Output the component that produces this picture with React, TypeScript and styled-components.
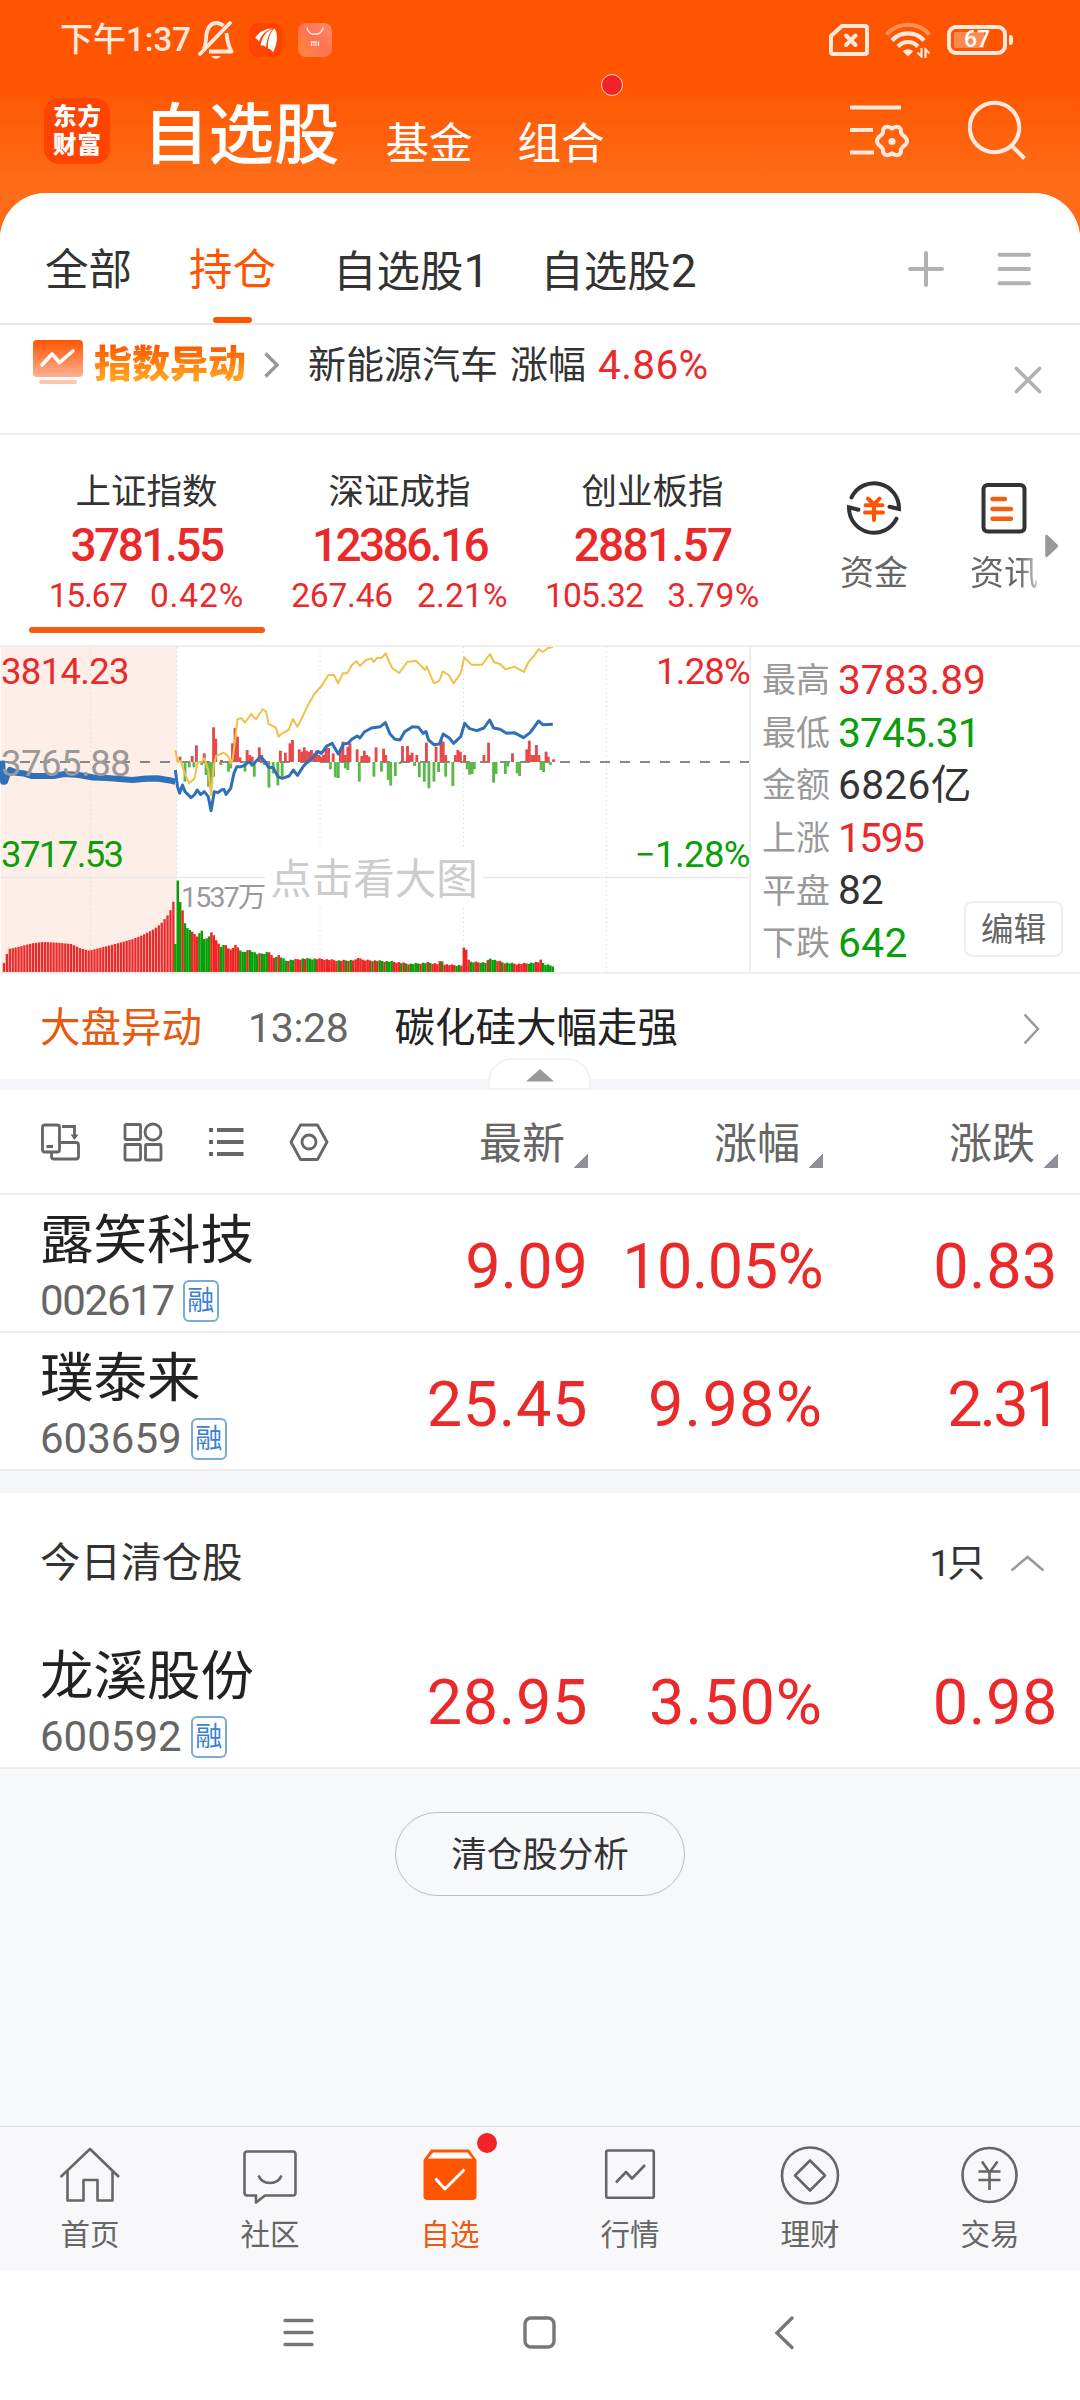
import React from "react";
import styled, { createGlobalStyle, css } from "styled-components";

const RED = "#ea2a2a";
const GREEN = "#0a9e0a";
const ORANGE = "#ff5500";
const SANS = `Roboto, "Noto Sans CJK SC", sans-serif`;

const GlobalStyle = createGlobalStyle`
  *, *::before, *::after { box-sizing: border-box; }
  body { margin: 0; background: #fff; font-family: ${SANS}; -webkit-font-smoothing: antialiased; }
`;

const Screen = styled.div`
  width: 1080px;
  height: 2400px;
  display: flex;
  flex-direction: column;
  overflow: hidden;
  background: linear-gradient(#ff5500 0, #ff5500 84px, #ff6c17 180px, #ff6c17 300px);
`;

const Txt = styled.span<{ $s: number; $c?: string; $w?: number; $ls?: number }>`
  font-size: ${(p) => p.$s}px;
  line-height: 1;
  white-space: pre;
  color: ${(p) => p.$c || "#333"};
  font-weight: ${(p) => p.$w || 400};
  letter-spacing: ${(p) => p.$ls || 0}px;
`;

/* ---------- status bar ---------- */
const StatusBar = styled.div`
  height: 80px;
  padding: 0 73px 1px 60px;
  display: flex;
  align-items: center;
  color: #ffe9dd;
`;
const StatusIcons = styled.div`
  display: flex;
  align-items: center;
  gap: 15px;
  margin-left: 7px;
`;
const StatusRight = styled.div`
  margin-left: auto;
  display: flex;
  align-items: center;
  gap: 16px;
`;
const Battery = styled.div`
  position: relative;
  width: 60px;
  height: 30px;
  border: 4px solid #ffe9dd;
  border-radius: 9px;
  display: flex;
  align-items: center;
  justify-content: center;
  background: linear-gradient(90deg, #ff8a50 66%, transparent 66%) content-box;
  padding: 3px;
  &::after {
    content: "";
    position: absolute;
    right: -10px;
    top: 6px;
    width: 4px;
    height: 10px;
    border-radius: 0 3px 3px 0;
    background: #ffe9dd;
  }
`;

/* ---------- app header ---------- */
const Header = styled.header`
  height: 113px;
  padding: 0 52px 0 44px;
  display: flex;
  align-items: flex-start;
`;
const Logo = styled.div`
  width: 66px;
  height: 66px;
  margin-top: 18px;
  border-radius: 15px;
  background: #ff4400;
  display: grid;
  grid-template-columns: 24.5px 24.5px;
  grid-auto-rows: 28px;
  place-content: center;
  place-items: center;
  color: #fff;
  font: 900 23.5px/28px ${SANS};
`;
const Title = styled.h1`
  margin: 23px 0 0 33px;
  font-size: 65.5px;
  line-height: 66px;
  font-weight: 500;
  color: #fff;
`;
const HeaderTab = styled.div<{ $ml: number }>`
  position: relative;
  margin: 42px 0 0 ${(p) => p.$ml}px;
  font-size: 43.5px;
  line-height: 46px;
  color: #fff;
`;
const Dot = styled.i<{ $right: number; $top: number; $ring?: boolean }>`
  position: absolute;
  right: ${(p) => p.$right}px;
  top: ${(p) => p.$top}px;
  width: ${(p) => (p.$ring ? 22 : 20)}px;
  height: ${(p) => (p.$ring ? 22 : 20)}px;
  border-radius: 50%;
  background: #f02328;
  ${(p) => p.$ring && css`border: 1.5px solid #ffd9c8;`}
`;
const HeaderActions = styled.div`
  margin: 20px 0 0 auto;
  display: flex;
  gap: 58px;
`;

/* ---------- sheet ---------- */
const Sheet = styled.main`
  flex: 1;
  display: flex;
  flex-direction: column;
  background: #f7f8fa;
  border-radius: 46px 46px 0 0;
  overflow: hidden;
`;
const Tabs = styled.nav`
  height: 132px;
  padding: 0 47px 0 45px;
  display: flex;
  gap: 57px;
  background: #fff;
  border-bottom: 2px solid #e8e8e8;
`;
const Tab = styled.div<{ $on?: boolean; $ml?: number }>`
  display: flex;
  flex-direction: column;
  align-items: center;
  justify-content: space-between;
  margin-left: ${(p) => p.$ml || 0}px;
  padding-top: 55px;
  font-size: 43.5px;
  line-height: 46px;
  color: ${(p) => (p.$on ? ORANGE : "#333")};
  &::after {
    content: "";
    width: 39px;
    height: 6px;
    border-radius: 3px;
    background: ${(p) => (p.$on ? ORANGE : "transparent")};
  }
`;
const TabDigit = styled.span`
  font-size: 46px;
`;
const TabTools = styled.div`
  margin-left: auto;
  padding-top: 57px;
  display: flex;
  gap: 50px;
`;

const Alert = styled.section`
  height: 110px;
  padding: 14px 38px 0 32px;
  display: flex;
  align-items: flex-start;
  background: #fff;
  border-bottom: 2px solid #ececec;
`;
const AlertTitle = styled.div`
  margin: 1px 0 0 10px;
  font: 900 38px/42px "Noto Sans CJK SC", sans-serif;
  background: linear-gradient(#ff5a00 15%, #ffa21f 90%);
  -webkit-background-clip: text;
  color: transparent;
`;
const AlertBody = styled.div<{ $ml: number }>`
  margin: 5px 0 0 ${(p) => p.$ml}px;
  display: flex;
  align-items: center;
  gap: 12px;
  height: 42px;
`;
const AlertClose = styled.div`
  margin: 27px 0 0 auto;
  height: 28px;
`;

/* ---------- indices ---------- */
const Indices = styled.section`
  height: 210px;
  padding-left: 20px;
  display: flex;
  background: #fff;
`;
const IndexCard = styled.div<{ $on?: boolean }>`
  width: 253px;
  display: flex;
  flex-direction: column;
  align-items: center;
  padding-top: 40px;
  &::after {
    content: "";
    margin-top: 14px;
    width: 236px;
    height: 6px;
    border-radius: 3px;
    background: ${(p) => (p.$on ? "#f75b0b" : "transparent")};
  }
`;
const IndexLine = styled.div<{ $h: number; $gap?: number }>`
  height: ${(p) => p.$h}px;
  display: flex;
  align-items: center;
  gap: ${(p) => p.$gap || 0}px;
`;
const Shortcut = styled.div<{ $ml: number; $fade?: boolean }>`
  width: 70px;
  margin-left: ${(p) => p.$ml}px;
  padding-top: 45px;
  display: flex;
  flex-direction: column;
  align-items: center;
  gap: 20px;
  ${(p) => p.$fade && css`
    ${Txt} {
      background: linear-gradient(90deg, #666 72%, #c4c4c4 100%);
      -webkit-background-clip: text;
      color: transparent;
    }
  `}
`;
const MoreArrow = styled.div`
  margin: 99px 0 0 6px;
`;

/* ---------- chart ---------- */
const ChartRow = styled.section`
  height: 329px;
  display: flex;
  background: #fff;
  border-top: 2px solid #eee;
  border-bottom: 2px solid #eee;
`;
const ChartBox = styled.div`
  position: relative;
  width: 751px;
  height: 325px;
  border-right: 2px solid #eee;
`;
const Label = styled.span<{ $x?: number; $r?: number; $y: number; $c: string; $s?: number; $ls?: number }>`
  position: absolute;
  ${(p) => (p.$r !== undefined ? `right: ${p.$r}px;` : `left: ${p.$x}px;`)}
  top: ${(p) => p.$y}px;
  font-size: ${(p) => p.$s || 36.5}px;
  line-height: 40px;
  white-space: pre;
  letter-spacing: ${(p) => p.$ls || 0}px;
  color: ${(p) => p.$c};
`;
const Hint = styled.span`
  position: absolute;
  left: 265px;
  top: 202px;
  width: 218px;
  height: 56px;
  background: #fff;
  text-align: center;
  font-size: 41.5px;
  line-height: 62px;
  color: #ccc;
`;
const Stats = styled.div`
  flex: 1;
  position: relative;
  padding: 7px 0 0 11px;
  display: flex;
  flex-direction: column;
`;
const Stat = styled.div`
  height: 52.6px;
  display: flex;
  align-items: center;
  gap: 8px;
`;
const EditButton = styled.button`
  position: absolute;
  right: 17px;
  bottom: 15px;
  width: 99px;
  height: 56px;
  padding: 3px 0 0;
  border: 2px solid #eee;
  border-radius: 8px;
  background: #fff;
  color: #666;
  font: 400 32.5px/1 ${SANS};
`;

/* ---------- news ---------- */
const News = styled.section`
  position: relative;
  height: 105px;
  padding: 4px 40px 0 40px;
  display: flex;
  align-items: center;
  background: #fff;
`;
const NewsTime = styled.div`
  margin: 0 46px 0 46px;
  display: flex;
`;
const PushRight = styled.div`
  margin-left: auto;
  display: flex;
`;
const CollapseHandle = styled.div`
  position: absolute;
  left: 488px;
  top: 84px;
  width: 103px;
  height: 32px;
  border: 2px solid #f1f2f4;
  border-radius: 24px 24px 3px 3px;
  background: #fff;
  display: flex;
  justify-content: center;
  padding-top: 9px;
`;
const Band = styled.div<{ $h: number }>`
  height: ${(p) => p.$h}px;
  background: #f5f6f9;
`;

/* ---------- table ---------- */
const TableHead = styled.div`
  height: 105px;
  padding: 2px 22px 0 40px;
  display: grid;
  grid-template-columns: 313px 235px 235px 235px;
  align-items: center;
  background: #fff;
  border-bottom: 2px solid #eee;
`;
const ViewTools = styled.div`
  display: flex;
  gap: 43px;
  padding-bottom: 2px;
`;
const ColHead = styled.div`
  display: flex;
  justify-content: flex-end;
  align-items: flex-end;
  gap: 9px;
  height: 50px;
  font-size: 43px;
  line-height: 48px;
  color: #666;
  &::after {
    content: "";
    width: 14px;
    height: 15px;
    background: linear-gradient(to bottom right, transparent 50%, #8f9096 50%);
  }
`;
const Row = styled.div`
  height: 138px;
  padding: 0 22px 0 40px;
  display: grid;
  grid-template-columns: 278px 270px 235px 235px;
  background: #fff;
  border-bottom: 2px solid #ececec;
`;
const NameCell = styled.div`
  display: flex;
  flex-direction: column;
  padding-top: 19px;
  gap: 12px;
`;
const CodeLine = styled.div`
  height: 42px;
  display: flex;
  align-items: center;
  gap: 9px;
`;
const Badge = styled.span`
  width: 36px;
  height: 42px;
  border: 2px solid #79abd9;
  border-radius: 6px;
  display: flex;
  align-items: center;
  justify-content: center;
  padding-top: 2px;
  font-size: 27px;
  line-height: 1;
  color: #3b82cc;
`;
const Value = styled.div<{ $ls?: number }>`
  padding-top: 40px;
  text-align: right;
  font-size: 63px;
  line-height: 64px;
  white-space: nowrap;
  letter-spacing: ${(p) => p.$ls || 0}px;
  color: ${RED};
`;
const ClearedHead = styled.div`
  height: 138px;
  padding: 3px 35px 0 40px;
  display: flex;
  align-items: center;
  background: #fff;
`;
const CountWrap = styled.div`
  margin-left: auto;
  display: flex;
  align-items: center;
  gap: 28px;
`;
const AnalysisButton = styled.button`
  align-self: center;
  margin-top: 43px;
  padding: 4px 0 0;
  width: 290px;
  height: 84px;
  border: 1.5px solid #bcbec2;
  border-radius: 42px;
  background: transparent;
  color: #333;
  font: 400 35.5px/1 ${SANS};
`;

/* ---------- bottom ---------- */
const BottomNav = styled.nav`
  margin-top: auto;
  height: 144px;
  flex: none;
  display: grid;
  grid-template-columns: repeat(6, 1fr);
  background: #f8f8fa;
  border-top: 1.5px solid #dfe0e3;
`;
const NavItem = styled.div<{ $on?: boolean }>`
  position: relative;
  display: flex;
  flex-direction: column;
  align-items: center;
  padding-top: 19px;
  gap: 12px;
  font-size: 29.5px;
  line-height: 34px;
  color: ${(p) => (p.$on ? "#f0590c" : "#666")};
`;
const SysNav = styled.div`
  height: 130px;
  flex: none;
  background: #fff;
  display: grid;
  grid-template-columns: 283px 239px 253px 1fr;
  align-items: center;
  padding-bottom: 5px;
`;
const SysIcon = styled.div<{ $col: number }>`
  grid-column: ${(p) => p.$col};
  height: 34px;
`;

/* ---------- chart data (units: x 1/2.8 px, y 1/3 px) ---------- */
const blue =
  "491,390 497,440 503,460 511,435 518,455 535,473 545,464 552,450 562,464 572,455 583,470 591,512 600,455 610,458 620,450 627,448 633,463 646,445 655,400 663,380 675,380 685,376 695,366 708,374 720,360 730,350 740,362 752,382 765,383 778,410 790,415 810,408 821,390 833,406 850,378 865,362 878,350 890,334 900,340 915,318 930,310 947,342 962,312 975,310 985,298 1000,288 1008,294 1020,276 1040,264 1065,260 1079,248 1092,282 1106,298 1120,300 1133,275 1155,260 1172,262 1185,280 1193,275 1200,300 1215,314 1230,312 1241,282 1258,294 1270,310 1290,290 1301,250 1315,266 1335,272 1355,264 1371,240 1382,264 1400,268 1418,280 1440,278 1466,293 1485,277 1508,243 1520,254 1548,253";
const preOpen =
  "5,362 7,385 9,425 14,425 20,405 28,390 45,398 65,400 90,408 150,408 180,402 220,405 260,412 300,414 370,420 410,416 440,415 480,422 491,425";
const yellow =
  "491,330 497,366 506,362 517,400 530,430 545,415 553,368 565,365 572,355 583,390 591,465 598,380 605,348 627,338 640,350 646,372 652,355 665,238 675,234 686,248 703,222 717,238 735,208 745,214 752,252 772,262 780,290 790,280 808,270 820,237 833,260 845,235 860,200 880,162 900,138 920,105 935,105 947,130 960,100 972,100 985,76 998,64 1008,78 1025,60 1040,55 1047,66 1055,54 1068,54 1080,40 1090,66 1098,84 1118,99 1140,66 1165,62 1190,90 1195,80 1215,130 1230,122 1240,94 1256,105 1270,130 1290,100 1300,52 1320,74 1350,74 1372,42 1383,66 1400,72 1415,88 1440,80 1467,96 1480,66 1495,48 1508,28 1520,36 1535,24 1548,21";
const ups =
  "504:350 538:348 550:316 572:340 598:262 604:296 620:360 651:310 658:264 665:290 672:352 692:330 699:345 706:350 726:322 733:345 785:332 799:338 812:310 819:300 838:328 845:335 852:322 858:332 865:335 872:330 880:340 886:332 893:345 900:350 906:345 913:325 920:324 933:340 953:330 960:305 967:345 974:320 980:310 1000:328 1013:348 1020:332 1027:345 1033:350 1053:322 1074:326 1080:345 1127:318 1141:318 1147:345 1154:338 1167:345 1194:308 1221:320 1235:300 1241:305 1248:345 1275:345 1282:330 1289:335 1301:345 1355:345 1368:308 1435:340 1475:328 1482:302 1489:345 1495:345 1502:315 1509:345 1529:335 1535:350 1550:358";
const downs =
  "518:425 530:382 543:382 565:375 577:405 584:440 591:440 598:410 618:375 640:395 646:385 686:395 705:380 712:410 740:375 753:443 765:400 778:436 790:410 925:388 939:412 947:414 967:385 974:390 1006:425 1047:410 1068:395 1087:420 1094:437 1107:408 1120:372 1161:378 1174:412 1188:425 1201:445 1215:425 1228:396 1248:410 1268:438 1308:388 1315:404 1322:402 1328:388 1382:428 1389:402 1415:402 1422:380 1448:400 1455:408 1515:390 1522:396 1541:375";
const pairs = (s: string) => s.split(" ").map((p) => p.split(":").map(Number));

const preVol = [[10, 972], [18, 945], [25, 927], [50, 921], [90, 910], [120, 906], [160, 908], [200, 912], [225, 925], [250, 932], [290, 921], [340, 907], [370, 898], [400, 885], [430, 868], [450, 852], [470, 825], [480, 805], [487, 780]];
const vol = [[491, 912], [498, 714], [505, 792], [511, 810], [518, 850], [525, 865], [538, 875], [552, 890], [558, 880], [565, 872], [572, 898], [584, 892], [591, 876], [598, 884], [605, 900], [618, 920], [632, 915], [645, 930], [660, 916], [680, 937], [700, 930], [720, 942], [740, 940], [753, 935], [765, 955], [779, 945], [800, 962], [850, 956], [900, 957], [950, 962], [999, 960], [1006, 948], [1013, 960], [1050, 962], [1100, 965], [1150, 972], [1200, 968], [1228, 972], [1235, 958], [1242, 972], [1260, 975], [1294, 976], [1301, 898], [1308, 948], [1316, 966], [1362, 968], [1370, 955], [1385, 960], [1410, 968], [1450, 972], [1508, 967], [1515, 955], [1522, 973], [1550, 978]];
const volColors = "GGGRGGGRRRGGGGGRRRRGGRRRRRRGGGRGGGGRGGGRRRGRGGGRGGRRRGRGGGGRRRRRRRRRGRRGRGRRRRRRRRGRRGGRGGGRRRGRGRGGGGRGGRGRRRRGRRRRRGGRGRRGGRRGGGRGGGRRGRGGGRRRRRRGGGRRRG";
const at = (pts: number[][], x: number) => {
  for (let i = 1; i < pts.length; i++) {
    if (x <= pts[i][0]) {
      const [x0, y0] = pts[i - 1];
      const [x1, y1] = pts[i];
      return y0 + ((y1 - y0) * (x - x0)) / (x1 - x0);
    }
  }
  return pts[pts.length - 1][1];
};
const preBars = Array.from({ length: 59 }, (_, i) => 11 + i * 8.18);
const volBars = Array.from({ length: 158 }, (_, i) => 491 + i * 6.73);
/* the spike at the afternoon open is drawn red */
const volColor = (x: number, i: number) =>
  Math.abs(x - 1300) < 4 || volColors[i] === "R" ? "#ee2626" : "#08a008";

const MarketChart = () => (
  <svg width="749" height="325" viewBox="0 0 749 325" style={{ display: "block" }}>
    <rect x="1" y="0" width="176" height="325" fill="#fdeee8" />
    <path d="M0 230.5H749" stroke="#e9e9e9" strokeWidth="1.5" />
    <path d="M90.5 0V325M177 0V325M320 0V325M463.5 0V325M606.5 0V325" stroke="#dedede" strokeWidth="1" strokeDasharray="1.5 3" />
    <path d="M0 115H749" stroke="#888" strokeWidth="2" strokeDasharray="10 10" />
    <g transform="translate(0,-7) scale(0.35714,0.33333)">
      {pairs(ups).map(([x, y]) => (
        <rect key={x} x={x - 4} y={y} width="8" height={366 - y} fill="#e64a4a" />
      ))}
      {pairs(downs).map(([x, y]) => (
        <rect key={x} x={x - 4} y={366} width="8" height={y - 366} fill="#5cb84a" />
      ))}
      <g fill="none" strokeLinejoin="round">
        <polyline points={yellow} stroke="#f0c04a" strokeWidth="2" vectorEffect="non-scaling-stroke" />
        <polyline points={preOpen} stroke="#2f70b8" strokeWidth="6.2" vectorEffect="non-scaling-stroke" />
        <polyline points={blue} stroke="#2f70b8" strokeWidth="3" vectorEffect="non-scaling-stroke" />
      </g>
      {preBars.map((x) => (
        <rect key={x} x={x - 3.2} y={at(preVol, x)} width="6.5" height={998 - at(preVol, x)} fill="#ea2a2a" />
      ))}
      {volBars.map((x, i) => {
        const y = at(vol, x) + (i > 18 ? ((i * 7) % 5) - 2 : 0);
        return <rect key={x} x={x - 3.4} y={y} width="6.9" height={998 - y} fill={volColor(x, i)} />;
      })}
    </g>
  </svg>
);

/* ---------- icons ---------- */
const W = "#ffe9dd";
const BellOff = () => (
  <svg width="36" height="40" viewBox="0 0 36 40" fill="none" stroke={W} strokeWidth="3.8" strokeLinejoin="round">
    <path d="M2 34L32 3" strokeLinecap="round" />
    <path d="M5.5 29c3-4 2-9 3-15C10 6 14 3 18.5 3c3 0 5 1 7 3M28.5 13c.6 7 1.5 12 5 18.500H11" />
    <path d="M13.5 36h9c-1.500 3.500-7.500 3.500-9 0z" fill={W} stroke="none" />
  </svg>
);
const WingApp = () => (
  <svg width="34" height="34" viewBox="0 0 34 34">
    <rect width="34" height="34" rx="9" fill="#ff4400" />
    <path d="M6 15C10 9 15 6 23 5.500C16 8 12.500 12 10 18.500C9 17 8 16 6 15zM11.500 22.500C13 14 17 8 24 6C20 10 18 16 17 24.500C15.500 23 13.500 22 11.500 22.500zM19 25.500C18.500 18 20.500 10 25.500 5.500C29.500 11 28.500 21 24 29.500C23 27.500 21.500 26 19 25.500z" fill="#fff" />
  </svg>
);
const MiApp = () => (
  <svg width="34" height="34" viewBox="0 0 34 34">
    <defs><linearGradient id="mi" x1="0" y1="1" x2="1" y2="0"><stop offset="0" stopColor="#ff8a3c" /><stop offset=".5" stopColor="#ff7350" /><stop offset="1" stopColor="#ff8a6a" /></linearGradient></defs>
    <rect width="34" height="34" rx="8" fill="url(#mi)" />
    <path d="M9 4.500c1 9 15 9 16 0" stroke="#ffe9dd" strokeWidth="1.6" fill="none" />
    <path d="M13.500 23v-4h4.500v4M15.800 20.500V23M20.500 18.500V23" stroke="#ffe9dd" strokeWidth="1.3" fill="none" />
  </svg>
);
const SimOff = () => (
  <svg width="40" height="32" viewBox="0 0 40 32" fill="none" stroke={W} strokeWidth="4" strokeLinejoin="round" strokeLinecap="round">
    <path d="M13 2H36a2 2 0 0 1 2 2V28a2 2 0 0 1-2 2H4a2 2 0 0 1-2-2V12z" />
    <path d="M17 11.500l9.500 9.500M26.500 11.500L17 21" />
  </svg>
);
const Wifi = () => (
  <svg width="46" height="36" viewBox="0 0 46 36" fill="none" stroke={W} strokeWidth="4.2">
    <path d="M1.500 12.500C13 -0.500 33 -0.500 44.500 12.500" opacity=".4" />
    <path d="M7 18.500C15.500 9 30.500 9 39 18.500" />
    <path d="M13 24.500C18.500 18.500 27.500 18.500 33 24.500" />
    <path d="M23 34.500l-5-5c2-3 8-3 10 0z" fill={W} stroke="none" />
    <path d="M36.500 26v8.500l-4-4M40.500 36v-8.500l4 4" strokeWidth="2.2" />
  </svg>
);
const FilterIcon = () => (
  <svg width="60" height="60" viewBox="0 0 60 60" fill="none" stroke={W} strokeWidth="4">
    <path d="M0 7.500H51M0 30H23M0 52.500H24" />
    <path d="M42 28.500q4-2.500 6.500-1.500q3 1.500 2.500 5.500q.5 2 3 3.500q3 2.500 3 5t-3 5q-2.500 1.500-3 3.500q.5 4-2.500 5.500q-2.500 1-6.500-1.500q-4 2.500-6.500 1.500q-3-1.500-2.500-5.500q-.5-2-3-3.500q-3-2.500-3-5t3-5q2.500-1.500 3-3.500q-.5-4 2.500-5.500q2.500-1 6.500 1.500z" />
    <circle cx="42" cy="41.500" r="3.6" fill={W} stroke="none" />
  </svg>
);
const SearchIcon = () => (
  <svg width="60" height="62" viewBox="0 0 60 62" fill="none" stroke={W} strokeWidth="4">
    <circle cx="26.500" cy="27.500" r="24.700" />
    <path d="M44 46L56.500 58.500" />
  </svg>
);
const G = "#999";
const LG = "#b2b2b2";
const PlusIcon = () => (
  <svg width="38" height="38" viewBox="0 0 38 38" stroke={LG} strokeWidth="4" strokeLinecap="round"><path d="M19 3V35M3 19H35" /></svg>
);
const MenuIcon = () => (
  <svg width="38" height="38" viewBox="0 0 38 38" stroke={LG} strokeWidth="4" strokeLinecap="round"><path d="M4.500 4.700H34M4.500 19H34M4.500 33.300H34" /></svg>
);
const AlertIcon = () => (
  <svg width="52" height="46" viewBox="0 0 52 46">
    <defs><linearGradient id="al" x1="0" y1="0" x2="0" y2="1"><stop offset="0" stopColor="#ff5500" /><stop offset="1" stopColor="#ffb094" /></linearGradient></defs>
    <rect x="1" y="1" width="50" height="37" rx="4" fill="url(#al)" />
    <path d="M10 26L20 15L27.500 23.500L41 12" stroke="#fff" strokeWidth="3.6" fill="none" strokeLinecap="round" strokeLinejoin="round" />
    <rect x="7" y="41" width="38" height="4" rx="2" fill="#ffc6ad" />
  </svg>
);
const Chevron = ({ w, h, sw = 3 }: { w: number; h: number; sw?: number }) => (
  <svg width={w} height={h} viewBox={`0 0 ${w} ${h}`} fill="none" stroke={G} strokeWidth={sw}>
    <path d={`M1.5 1.5L${w - 2} ${h / 2}L1.5 ${h - 1.5}`} />
  </svg>
);
const CloseIcon = () => (
  <svg width="28" height="28" viewBox="0 0 28 28" stroke={LG} strokeWidth="3.8" strokeLinecap="round"><path d="M2.500 2.500L25.500 25.500M25.500 2.500L2.500 25.500" /></svg>
);
const FundIcon = () => (
  <svg width="56" height="56" viewBox="0 0 56 56" fill="none" stroke="#333" strokeWidth="4" strokeLinecap="round">
    <path d="M5.500 17.400A25 25 0 0 1 53 29L43.500 26.700" />
    <path d="M50.500 38.700A25 25 0 0 1 3 27.400L12.400 29.700" />
    <path d="M22 18.500L28 24.500L33.500 18.500M19.500 25.300H36.500M19 32.500H37M28 25V40" stroke={ORANGE} />
  </svg>
);
const NewsIcon = () => (
  <svg width="56" height="56" viewBox="0 0 56 56" fill="none" stroke="#333" strokeWidth="4" strokeLinecap="round">
    <rect x="7.500" y="5" width="41" height="46.500" rx="4" />
    <path d="M16.500 19H29M16.500 29H35M16.500 38.700H35" stroke="#f2600f" strokeWidth="4.4" />
  </svg>
);
const ic = { fill: "none", stroke: "#666", strokeWidth: 2.8 } as const;
const RotateIcon = () => (
  <svg width="40" height="40" viewBox="0 0 40 40" {...ic}>
    <rect x="2.500" y="3" width="17" height="27" rx="2" />
    <path d="M6.500 24.500H13M22 4.500H34.500V14M20.500 20.500H36a2.500 2.500 0 0 1 2.500 2.500V34.500a2.500 2.500 0 0 1-2.500 2.500H14a2.500 2.500 0 0 1-2.500-2.500V30" />
    <path d="M30.500 12.500H38.500L34.500 18z" fill="#666" stroke="none" />
  </svg>
);
const GridIcon = () => (
  <svg width="40" height="40" viewBox="0 0 40 40" {...ic}>
    <rect x="2" y="2.500" width="15.500" height="15" rx="1" /><circle cx="30" cy="10" r="8" />
    <rect x="2" y="22.500" width="15.500" height="15.500" rx="1" /><rect x="22.500" y="22.500" width="15.500" height="15.500" rx="1" />
  </svg>
);
const ListIcon = () => (
  <svg width="40" height="40" viewBox="0 0 40 40" {...ic} strokeWidth="3.8">
    <path d="M3 8H7M11 8H37.500M3 20H7M11 20H37.500M3 32H7M11 32H37.500" />
  </svg>
);
const HexIcon = () => (
  <svg width="40" height="40" viewBox="0 0 40 40" {...ic} strokeLinejoin="round">
    <path d="M11.500 3H28.500L38 20L28.500 37.500H11.500L2 20z" /><circle cx="20" cy="20" r="7" />
  </svg>
);
const navPaths: Record<string, React.ReactNode> = {
  首页: <path d="M.5 31L30 3L59 31M7.500 25V54.500H23.500V34H37.500V54.500H52.500V25" />,
  社区: <path d="M7 5.500H53a2.500 2.500 0 0 1 2.500 2.500V47a2.500 2.500 0 0 1-2.500 2.500H25L16 56.500V49.500H7a2.500 2.500 0 0 1-2.500-2.500V8a2.500 2.500 0 0 1 2.500-2.500zM18.500 29.500c4 10 19 10 23 0" />,
  自选: (
    <>
      <path d="M3.500 14L11 3.500H49L56.500 14V50a4 4 0 0 1-4 4H7.500a4 4 0 0 1-4-4z" fill={ORANGE} stroke="none" />
      <path d="M13 6.500H47.500L52.500 12.500H8z" fill="#fff" stroke="none" />
      <path d="M15.500 32.500L25 43L44.500 23.500" stroke="#fff" strokeWidth="3" />
    </>
  ),
  行情: <path d="M8 4.500H52a1.800 1.800 0 0 1 1.800 1.800V50a1.800 1.800 0 0 1-1.800 1.800H8A1.800 1.800 0 0 1 6.200 50V6.300A1.800 1.800 0 0 1 8 4.500zM16 36.500L26 26L32 32.500L45 19" />,
  理财: <><circle cx="30" cy="29.500" r="28" /><path d="M30 14.500L45 29.500L30 44.500L15 29.500z" /></>,
  交易: <><circle cx="29.500" cy="29" r="27" /><path d="M22 15.500L29.500 26.500L37.500 15.500M29.500 26V44M18.500 25.500H40.500M18.500 34H40.500" /></>,
};

const indices = [
  { n: "上证指数", v: "3781.55", a: "15.67", b: "0.42%", g: 23, ls: -2.5, als: -1.2, bls: 0.9 },
  { n: "深证成指", v: "12386.16", a: "267.46", b: "2.21%", g: 24, ls: -2.6, als: -0.2, bls: 0.2 },
  { n: "创业板指", v: "2881.57", a: "105.32", b: "3.79%", g: 24, ls: -1.7, als: -0.8, bls: 0.6 },
];
const stats: [string, string, string, number][] = [
  ["最高", "3783.89", RED, 0],
  ["最低", "3745.31", GREEN, -0.9],
  ["金额", "6826亿", "#333", 0.3],
  ["上涨", "1595", RED, -1.5],
  ["平盘", "82", "#333", 0],
  ["下跌", "642", GREEN, 0.4],
];

type Cell = [string, number];
const StockRow = ({ name, code, ls = 0, values }: { name: string; code: string; ls?: number; values: Cell[] }) => (
  <Row>
    <NameCell>
      <Txt $s={53.5} $c="#222">{name}</Txt>
      <CodeLine>
        <Txt $s={42} $c="#666" $ls={ls}>{code}</Txt>
        <Badge>融</Badge>
      </CodeLine>
    </NameCell>
    {values.map(([v, s]) => <Value key={v} $ls={s}>{v}</Value>)}
  </Row>
);

export default function App() {
  return (
    <>
      <GlobalStyle />
      <Screen>
        <StatusBar>
          <Txt $s={33} $c={W} $w={500}>下午1:37</Txt>
          <StatusIcons><BellOff /><WingApp /><MiApp /></StatusIcons>
          <StatusRight>
            <SimOff /><Wifi />
            <Battery><Txt $s={23} $c="#fff" $w={500}>67</Txt></Battery>
          </StatusRight>
        </StatusBar>

        <Header>
          <Logo><span>东</span><span>方</span><span>财</span><span>富</span></Logo>
          <Title>自选股</Title>
          <HeaderTab $ml={46}>基金</HeaderTab>
          <HeaderTab $ml={45}>组合<Dot $ring $right={-18} $top={-48} /></HeaderTab>
          <HeaderActions><FilterIcon /><SearchIcon /></HeaderActions>
        </Header>

        <Sheet>
          <Tabs>
            <Tab>全部</Tab>
            <Tab $on>持仓</Tab>
            <Tab><span>自选股<TabDigit>1</TabDigit></span></Tab>
            <Tab $ml={-6}><span>自选股<TabDigit>2</TabDigit></span></Tab>
            <TabTools><PlusIcon /><MenuIcon /></TabTools>
          </Tabs>

          <Alert>
            <AlertIcon />
            <AlertTitle>指数异动</AlertTitle>
            <AlertBody $ml={18}><Chevron w={15} h={26} sw={3.5} /></AlertBody>
            <AlertBody $ml={29}>
              <Txt $s={38}>新能源汽车</Txt>
              <Txt $s={38}>涨幅</Txt>
              <Txt $s={40.5} $c={RED} $ls={0.4}>4.86%</Txt>
            </AlertBody>
            <AlertClose><CloseIcon /></AlertClose>
          </Alert>

          <Indices>
            {indices.map((i, k) => (
              <IndexCard key={i.n} $on={k === 0}>
                <IndexLine $h={36}><Txt $s={35.5}>{i.n}</Txt></IndexLine>
                <IndexLine $h={68}><Txt $s={46} $w={500} $c={RED} $ls={i.ls}>{i.v}</Txt></IndexLine>
                <IndexLine $h={34} $gap={i.g}>
                  <Txt $s={33.5} $c={RED} $ls={i.als}>{i.a}</Txt>
                  <Txt $s={33.5} $c={RED} $ls={i.bls}>{i.b}</Txt>
                </IndexLine>
              </IndexCard>
            ))}
            <Shortcut $ml={60}><FundIcon /><Txt $s={34} $c="#666">资金</Txt></Shortcut>
            <Shortcut $ml={60} $fade><NewsIcon /><Txt $s={34} $c="#666">资讯</Txt></Shortcut>
            <MoreArrow>
              <svg width="14" height="24" viewBox="0 0 14 24"><path d="M1.500 2L12 12L1.500 22z" fill={G} stroke={G} strokeWidth="2.500" strokeLinejoin="round" /></svg>
            </MoreArrow>
          </Indices>

          <ChartRow>
            <ChartBox>
              <MarketChart />
              <Label $x={1} $y={5} $c={RED} $ls={-0.7}>3814.23</Label>
              <Label $x={1} $y={97} $c="#999" $ls={-0.5}>3765.88</Label>
              <Label $x={1} $y={188} $c={GREEN} $ls={-1.6}>3717.53</Label>
              <Label $r={-1} $y={5} $c={RED} $ls={-0.8}>1.28%</Label>
              <Label $r={-1} $y={188} $c={GREEN} $ls={-0.6}>−1.28%</Label>
              <Label $x={181} $y={231} $s={28.5} $c="#999" $ls={-1.8}>1537万</Label>
              <Hint>点击看大图</Hint>
            </ChartBox>
            <Stats>
              {stats.map(([l, v, c, ls]) => (
                <Stat key={l}><Txt $s={34} $c="#999">{l}</Txt><Txt $s={40.7} $c={c} $ls={ls}>{v}</Txt></Stat>
              ))}
              <EditButton>编辑</EditButton>
            </Stats>
          </ChartRow>

          <News>
            <Txt $s={40.5} $c="#e8590c">大盘异动</Txt>
            <NewsTime><Txt $s={41} $c="#666" $ls={-0.3}>13:28</Txt></NewsTime>
            <Txt $s={40.5} $c="#222">碳化硅大幅走强</Txt>
            <PushRight><Chevron w={17} h={32} sw={2.5} /></PushRight>
            <CollapseHandle>
              <svg width="28" height="13" viewBox="0 0 28 13"><path d="M14 0L28 12.500H0z" fill="#999" /></svg>
            </CollapseHandle>
          </News>
          <Band $h={11} />

          <TableHead>
            <ViewTools><RotateIcon /><GridIcon /><ListIcon /><HexIcon /></ViewTools>
            <ColHead>最新</ColHead>
            <ColHead>涨幅</ColHead>
            <ColHead>涨跌</ColHead>
          </TableHead>
          <StockRow name="露笑科技" code="002617" ls={-1.3} values={[["9.09", 0], ["10.05%", -0.6], ["0.83", 0.5]]} />
          <StockRow name="璞泰来" code="603659" values={[["25.45", 0.6], ["9.98%", 1.2], ["2.31", -3]]} />
          <Band $h={22} />
          <ClearedHead>
            <Txt $s={40.5}>今日清仓股</Txt>
            <CountWrap>
              <Txt $s={37.5} $ls={-3}>1只</Txt>
              <svg width="35" height="17" viewBox="0 0 35 17" fill="none" stroke={G} strokeWidth="2.5"><path d="M1.500 15.500L17.500 2L33.500 15.500" /></svg>
            </CountWrap>
          </ClearedHead>
          <StockRow name="龙溪股份" code="600592" values={[["28.95", 0.6], ["3.50%", 1], ["0.98", 0.6]]} />
          <AnalysisButton>清仓股分析</AnalysisButton>

          <BottomNav>
            {Object.keys(navPaths).map((k) => (
              <NavItem key={k} $on={k === "自选"}>
                <svg width="60" height="60" viewBox="0 0 60 60" fill="none" stroke="#666" strokeWidth="2.6" strokeLinejoin="round">{navPaths[k]}</svg>
                {k}
                {k === "自选" && <Dot $right={43} $top={6} />}
              </NavItem>
            ))}
          </BottomNav>
          <SysNav>
            <SysIcon $col={2}>
              <svg width="34" height="34" viewBox="0 0 34 34" stroke="#777" strokeWidth="3.4" strokeLinecap="round"><path d="M2 4.500H29M2 16.500H29M2 28.500H29" /></svg>
            </SysIcon>
            <SysIcon $col={3}>
              <svg width="34" height="34" viewBox="0 0 34 34" fill="none" stroke="#777" strokeWidth="3.4"><rect x="3" y="2" width="29" height="29" rx="6" /></svg>
            </SysIcon>
            <SysIcon $col={4}>
              <svg width="20" height="34" viewBox="0 0 20 34" fill="none" stroke="#777" strokeWidth="3.4" strokeLinecap="round"><path d="M17 2L2 17L17 31.500" /></svg>
            </SysIcon>
          </SysNav>
        </Sheet>
      </Screen>
    </>
  );
}
